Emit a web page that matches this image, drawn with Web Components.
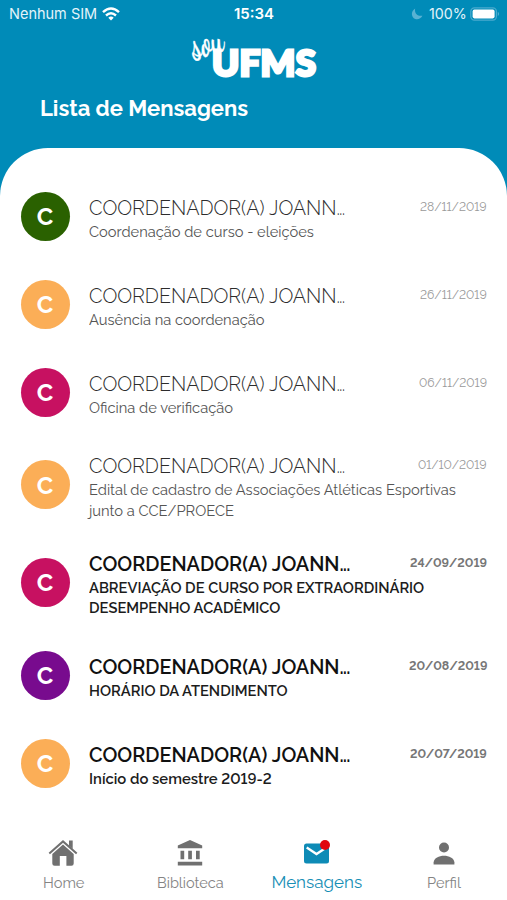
<!DOCTYPE html>
<html lang="pt-BR">
<head>
<meta charset="utf-8">
<title>Lista de Mensagens</title>
<style>
html,body{margin:0;padding:0;background:#fff}
body{font-family:Raleway,Lato,"Open Sans",sans-serif;font-variant-numeric:lining-nums;width:507px;height:900px;overflow:hidden}
</style>
</head>
<body>
<messages-app></messages-app>
<script>
const define = (name, html, setup) => customElements.define(name, class extends HTMLElement {
  connectedCallback() {
    if (this.shadowRoot) return;
    const root = this.attachShadow({mode: 'open'});
    root.innerHTML = typeof html === 'function' ? html(this) : html;
    if (setup) setup(this, root);
  }
});

/* Single line of text stretched to an exact width. */
define('fit-text', `<style>
:host{display:block;white-space:nowrap;flex:none}
span{display:inline-block;transform-origin:0 50%}
</style><span><slot></slot></span>`, (el, root) => {
  const w = +el.getAttribute('w');
  el.style.width = w + 'px';
  const s = root.querySelector('span');
  s.style.transform = `scaleX(${w / s.offsetWidth})`;
});

define('status-bar', `<style>
:host{display:grid;grid-template-columns:1fr auto 1fr;align-items:center;height:28px;padding:0 8px 0 9px;box-sizing:border-box;
 color:#e4f4fa;font:400 15px/28px Inter,sans-serif}
.l,.r{display:flex;align-items:center}
.l{gap:5px}.r{justify-content:flex-end}
.t{font-weight:600;color:#fff}
svg{display:block;flex:none}
.moon{margin-right:6px}.bat{margin-left:3px;margin-right:-1px}
</style>
<div class="l"><fit-text w="88">Nenhum SIM</fit-text>
<svg width="18" height="14" viewBox="0 0 18 14"><g fill="none" stroke="#fff" stroke-width="2.4"><path d="M1 5.2Q9-2.3 17 5.2"/><path d="M4 8.5Q9 4 14 8.5"/></g><path fill="#fff" d="M6.3 10.7Q9 8.5 11.7 10.7L9 13.6Z"/></svg></div>
<fit-text class="t" w="40">15:34</fit-text>
<div class="r"><svg class="moon" width="12" height="12" viewBox="0 0 12 12"><path fill="#58b2d3" d="M4.2.6C3.2 4.7 6.2 8.6 11.4 7.7 10 10.6 7 11.8 4.2 10.9.2 9.4-.6 3.400 4.200.6Z"/></svg>
<fit-text w="38">100%</fit-text>
<svg class="bat" width="30" height="14" viewBox="0 0 30 14"><rect x=".8" y=".8" width="25.600" height="12.400" rx="3.600" fill="none" stroke="#4aabce" stroke-width="1.200"/><rect x="2.600" y="2.600" width="22" height="8.800" rx="1.800" fill="#fff"/><path d="M27.800 4.800Q30 7 27.800 9.200Z" fill="#62b6d4"/></svg></div>`);

define('sou-logo', `<style>
:host{display:block;position:relative;width:126px;height:44px;color:#fff}
.u{position:absolute;left:21px;top:8.500px;font:900 35.500px/40px Lato,sans-serif;-webkit-text-stroke:3px #fff;letter-spacing:.3px}
.s{position:absolute;left:-2px;top:-11px;font:700 32px/36px "Dancing Script",Caveat,Pacifico,"Open Sans",sans-serif;-webkit-text-stroke:.3px #fff;transform:rotate(-18deg) scaleY(1.4)}
</style><fit-text class="s" w="33">sou</fit-text><fit-text class="u" w="104">UFMS</fit-text>`);

define('app-header', `<style>
:host{display:flex;flex-direction:column;height:148px;background:#008bb8;color:#fff}
sou-logo{margin:6px 0 0 191px}
.h{margin:17px 0 0 40px;font-weight:700;font-size:21.500px;line-height:28px}
</style><status-bar></status-bar><sou-logo></sou-logo><fit-text class="h" w="208.500">Lista de Mensagens</fit-text>`);

define('message-row', el => {
  const unread = el.hasAttribute('unread');
  const lines = el.getAttribute('lines').split('|').map(l => l.split('~'));
  return `<style>
:host{display:flex;align-items:center;height:${lines.length > 1 ? 97.600 : 88}px;padding:0 20px 0 20.500px;box-sizing:border-box}
.a{width:49px;height:49px;border-radius:50%;flex:none;display:flex;align-items:center;justify-content:center;color:#fff;font-weight:700;font-size:24px;line-height:49px;padding-top:1px;box-sizing:border-box}
.b{flex:1;margin-left:19.500px;padding-top:4.800px}
.top{display:flex;justify-content:space-between;height:27px;line-height:27px}
.n{font-size:20px;color:${unread ? '#111' : '#2c2c2c'};font-weight:${unread ? 600 : 300}}
.n i{font-style:normal;letter-spacing:-.9px}
.d{font-size:12.300px;line-height:23px;color:${unread ? '#777' : '#999'};font-weight:${unread ? 700 : 400}}
.s{font-size:14.800px;line-height:20.700px;color:${unread ? '#1c1c1c' : '#555'};font-weight:${unread ? 600 : 400}}
</style><div class="a" style="background:${el.getAttribute('color')}">C</div>
<div class="b"><div class="top"><fit-text class="n" w="${unread ? 260.500 : 255}">COORDENADOR(A) JOANN<i>...</i></fit-text>
<fit-text class="d" w="${el.getAttribute('dw')}">${el.getAttribute('date')}</fit-text></div>
${lines.map(l => `<fit-text class="s" w="${l[1]}">${l[0]}</fit-text>`).join('')}</div>`;
});

define('message-list', `<style>
:host{display:block;flex:1;background:#008bb8}
div{background:#fff;border-radius:48px 48px 0 0;padding-top:24px;height:100%;box-sizing:border-box}
</style><div><slot></slot></div>`);

define('tab-item', el => `<style>
:host{display:flex;flex-direction:column;align-items:center;color:#848484;font-size:15px;line-height:20px}
:host([active]){color:#168eb5;font-size:17px}
.i{height:35px;display:flex;align-items:flex-start}
:host([active]) .i{height:34px}
</style><div class="i"><slot></slot></div><fit-text w="${el.getAttribute('w')}">${el.getAttribute('label')}</fit-text>`);

define('tab-bar', `<style>
:host{display:grid;grid-template-columns:repeat(4,1fr);height:62px;background:#fff;flex:none}
svg{display:block}
</style>
<tab-item label="Home" w="41"><svg width="30" height="28" viewBox="0 0 30 28"><path d="M1.300 15.500 15 3.400 28.700 15.500" fill="none" stroke="#707070" stroke-width="2"/><path d="M21 2.600h3.700v8.400L21 7.700Z" fill="#707070"/><path d="M4.300 16 15 6.500 25.700 16v9.500a2.300 2.300 0 0 1-2.300 2.300h-5V18h-6.600v9.800H6.600a2.300 2.300 0 0 1-2.300-2.300Z" fill="#707070"/></svg></tab-item>
<tab-item label="Biblioteca" w="67"><svg width="26" height="28" viewBox="0 0 26 28"><path fill="#707070" d="M.8 7.500 13 2l12.200 5.500v2.800H.8ZM3.500 12.800h3.700v8.500H3.500Zm7.700 0h3.700v8.500h-3.700Zm7.800 0h3.700v8.500H19ZM.8 23.800h24.400v3.700H.8Z"/></svg></tab-item>
<tab-item active label="Mensagens" w="91"><svg width="26" height="28" viewBox="0 0 26 28"><rect x="0" y="5.500" width="25" height="20" rx="2.500" fill="#0e8bb6"/><path d="M2.700 9.500 12.500 16 20.500 10.800" fill="none" stroke="#fff" stroke-width="2.300"/><circle cx="21" cy="7" r="5" fill="#e1060f"/></svg></tab-item>
<tab-item label="Perfil" w="34"><svg width="22" height="28" viewBox="0 0 22 28"><circle cx="11" cy="9.500" r="5" fill="#707070"/><path d="M.6 26.600v-2.300C1.500 15.500 20.500 15.500 21.400 24.300v2.300Z" fill="#707070"/></svg></tab-item>`);

define('messages-app', `<style>:host{display:flex;flex-direction:column;width:507px;height:900px;overflow:hidden}</style>
<app-header></app-header>
<message-list>
<message-row color="#2a6100" date="28/11/2019" dw="67" lines="Coordenação de curso - eleições~225"></message-row>
<message-row color="#fbae57" date="26/11/2019" dw="67" lines="Ausência na coordenação~175.500"></message-row>
<message-row color="#c71161" date="06/11/2019" dw="68" lines="Oficina de verificação~144"></message-row>
<message-row color="#fbae57" date="01/10/2019" dw="69" lines="Edital de cadastro de Associações Atléticas Esportivas~367|junto a CCE/PROECE~145"></message-row>
<message-row unread color="#c71161" date="24/09/2019" dw="77" lines="ABREVIAÇÃO DE CURSO POR EXTRAORDINÁRIO~335|DESEMPENHO ACADÊMICO~191"></message-row>
<message-row unread color="#780b8e" date="20/08/2019" dw="78" lines="HORÁRIO DA ATENDIMENTO~199"></message-row>
<message-row unread color="#fbae57" date="20/07/2019" dw="77" lines="Início do semestre 2019-2~182.500"></message-row>
</message-list>
<tab-bar></tab-bar>`);
</script>
</body>
</html>
